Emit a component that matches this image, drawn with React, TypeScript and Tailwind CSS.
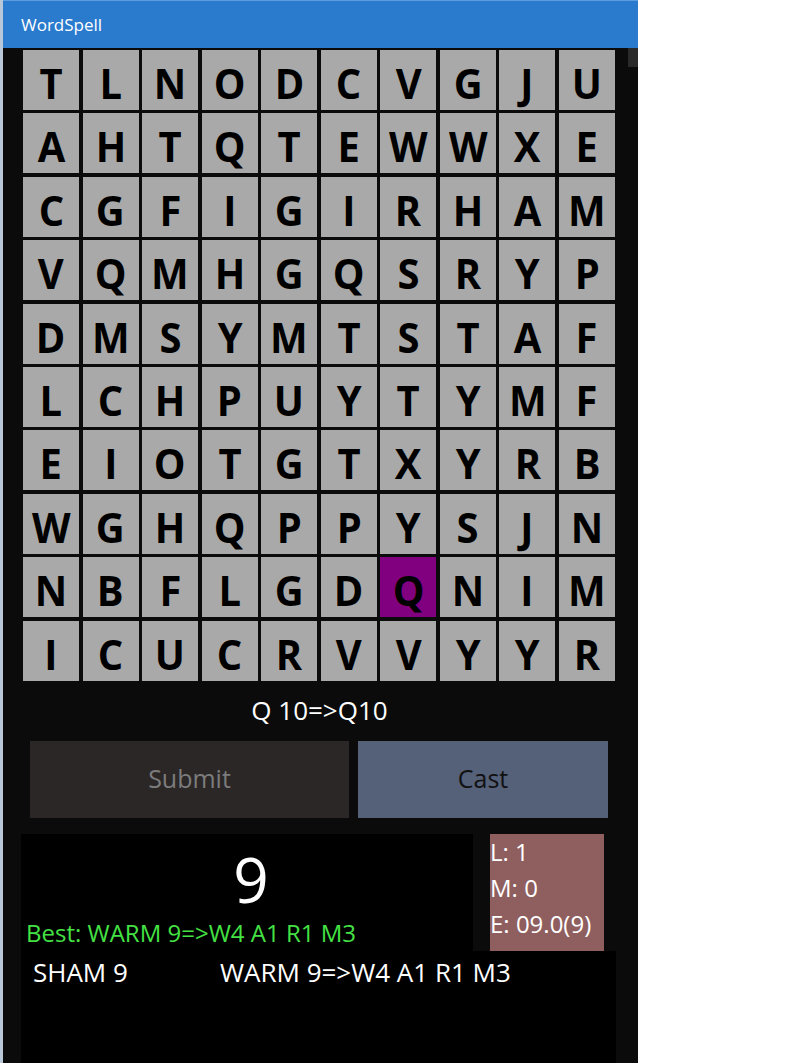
import React from "react";

const ROWS = [
  "TLNODCVGJU",
  "AHTQTEWWXE",
  "CGFIGIRHAM",
  "VQMHGQSRYP",
  "DMSYMTSTAF",
  "LCHPUYTYMF",
  "EIOTGTXYRB",
  "WGHQPPYSJN",
  "NBFLGDQNIM",
  "ICUCRVVYYR",
];

const font = { fontFamily: '"Open Sans", "Noto Sans", sans-serif' };

export default function App() {
  return (
    <div className="w-[800px] h-[1063px] bg-white flex overflow-hidden" style={font}>
      <div className="w-[3px] h-full bg-[#b8c8d8]" />
      <div className="w-[635px] h-full flex flex-col">
        <div className="h-[48px] bg-[#2a7acd] border-t border-[#5c9ddf] flex items-center pl-[18px] shrink-0">
          <span className="text-white text-[17px] leading-none">WordSpell</span>
        </div>
        <div className="flex-1 bg-[#0b0b0b] relative flex flex-col">
          <div className="absolute right-0 top-0 w-[10px] h-[19px] bg-[#2a2a2a]" />
          <div className="ml-[20px] mt-[2px] w-[592px] grid grid-cols-10 gap-x-[3.5px] gap-y-[3.4px]">
            {ROWS.map((row, r) =>
              row.split("").map((ch, c) => {
                const sel = r === 8 && c === 6;
                return (
                  <div
                    key={`${r}-${c}`}
                    className={`h-[60px] flex items-center justify-center ${sel ? "bg-[#800080]" : "bg-[#a9a9a9]"}`}
                  >
                    <span className="text-black font-bold text-[42px] leading-none scale-x-[0.95] translate-y-[3px]">
                      {ch}
                    </span>
                  </div>
                );
              })
            )}
          </div>
          <div className="h-[58px] flex items-center justify-center pr-[2px]">
            <span className="text-white text-[26px] leading-none">Q 10=&gt;Q10</span>
          </div>
          <div className="flex ml-[27px] gap-[9px] h-[77px] mt-[2px]">
            <div className="w-[319px] h-full bg-[#2b2727] flex items-center justify-center">
              <span className="text-[#7c7c7c] text-[25px]">Submit</span>
            </div>
            <div className="w-[250px] h-full bg-[#556079] flex items-center justify-center">
              <span className="text-[#111111] text-[25px]">Cast</span>
            </div>
          </div>
          <div className="ml-[18px] mt-[16px] w-[595px] flex-1 flex flex-col">
            <div className="flex h-[117px]">
              <div className="w-[452px] h-full bg-black flex flex-col">
                <div className="flex justify-center pt-[14px] h-[87px]">
                  <span className="text-white text-[62px] leading-none pl-[8px]">9</span>
                </div>
                <div className="pl-[5px] text-[#44e244] text-[24px] leading-none">
                  Best: WARM 9=&gt;W4 A1 R1 M3
                </div>
              </div>
              <div className="w-[17px]" />
              <div className="w-[114px] h-full bg-[#8f5f5f] flex flex-col text-white text-[24px] leading-[36px]">
                <span>L: 1</span>
                <span>M: 0</span>
                <span>E: 09.0(9)</span>
              </div>
            </div>
            <div className="flex-1 bg-black flex text-white text-[26px] leading-none pt-[8px]">
              <span className="pl-[12px] w-[199px]">SHAM 9</span>
              <span>WARM 9=&gt;W4 A1 R1 M3</span>
            </div>
          </div>
        </div>
      </div>
    </div>
  );
}
